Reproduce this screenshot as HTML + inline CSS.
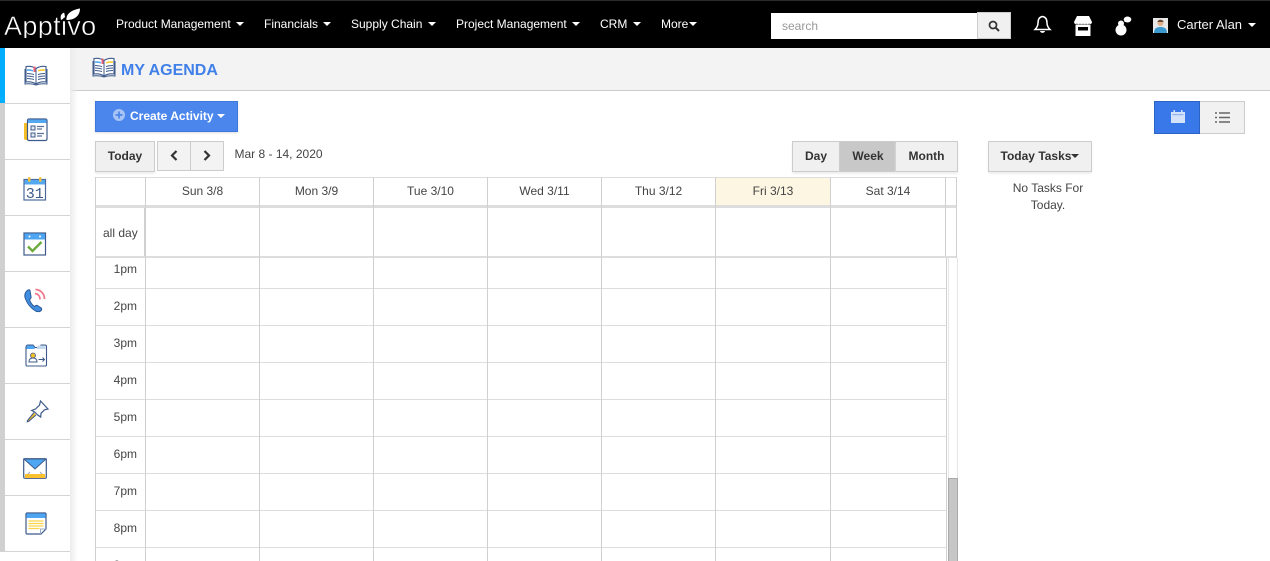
<!DOCTYPE html>
<html><head><meta charset="utf-8"><style>
html,body{margin:0;padding:0;width:1270px;height:561px;overflow:hidden;background:#fff;font-family:"Liberation Sans",sans-serif;color:#333}
#w{position:relative;width:1270px;height:561px;overflow:hidden}
.a{position:absolute}
.t{position:absolute;white-space:nowrap;font-size:12px;line-height:14px}
.n{position:absolute;top:17px;color:#fff;font-size:12px;line-height:14px;white-space:nowrap}
.c{display:inline-block;width:0;height:0;border-left:4px solid transparent;border-right:4px solid transparent;border-top:4px solid #fff;vertical-align:2px;margin-left:3px}
.h{position:absolute;background:#ddd;height:1px}
.v{position:absolute;background:#d0d0d0;width:1px}
.btn{position:absolute;box-sizing:border-box;background:#f0f0f0;border:1px solid #ccc;font-size:12px;font-weight:bold;color:#333;text-align:center;box-shadow:0 2px 2px #eee}
.day{position:absolute;top:184px;font-size:12px;line-height:14px;color:#444;text-align:center}
.tm{position:absolute;left:96px;width:41px;text-align:right;font-size:12px;line-height:14px;color:#444}
.s{position:absolute;left:5px;width:65px;height:1px;background:#d4d4d4}
svg{position:absolute;overflow:visible}
</style></head><body><div id="w">
<div class="a" style="left:0;top:0;width:1270px;height:48px;background:#000"></div>
<div class="a" style="left:0;top:0;width:1270px;height:1px;background:#2a2a2a"></div>

<div class="a" style="left:0;top:10px;width:100px;height:28px;overflow:hidden"><div class="t" style="left:4px;top:1px;font-size:27px;line-height:30px;color:#fff;letter-spacing:.35px;-webkit-text-stroke:.5px #000">Apptivo</div></div>
<svg style="left:60px;top:8px" width="22" height="14" viewBox="0 0 22 14"><path d="M1 12C0 8 1 6 4 4.500c1.500 3 .5 6-3 7.500zM6.500 12C6 6 11 2 20 .5c0 7-5 11.500-13.500 11.500z" fill="#fff"/></svg>

<div class="n" style="left:116px">Product Management <i class="c" style="margin-left:2px"></i></div>
<div class="n" style="left:264px">Financials <i class="c" style="margin-left:2px"></i></div>
<div class="n" style="left:351px">Supply Chain <i class="c" style="margin-left:2px"></i></div>
<div class="n" style="left:456px">Project Management <i class="c" style="margin-left:2px"></i></div>
<div class="n" style="left:600px">CRM <i class="c" style="margin-left:2px"></i></div>
<div class="n" style="left:661px">More<i class="c" style="margin-left:1px"></i></div>

<div class="a" style="left:771px;top:13px;width:206px;height:26px;background:#fff"></div>
<div class="t" style="left:782px;top:19px;color:#999">search</div>
<div class="a" style="left:977px;top:12px;width:34px;height:27px;box-sizing:border-box;background:#f0f0f0;border:1px solid #ccc"></div>
<svg style="left:988px;top:20px" width="12" height="12" viewBox="0 0 12 12"><circle cx="5" cy="5" r="3.500" fill="none" stroke="#333" stroke-width="1.700"/><path d="M7.800 7.800L11 11" stroke="#333" stroke-width="2"/></svg>

<svg style="left:1033px;top:15px" width="19" height="20" viewBox="0 0 19 20"><path d="M9.500 1.500C6 2 5 5 5 8c0 3-1.500 5-3 6.500h15C15.500 13 14 11 14 8c0-3-1-6-4.500-6.500z" fill="none" stroke="#fff" stroke-width="1.500"/><path d="M7 16c.5 2.500 4.500 2.500 5 0z" fill="#fff"/></svg>
<svg style="left:1074px;top:16px" width="18" height="20" viewBox="0 0 18 20"><path d="M3 0h12l3 6c0 2-2 2.500-3 1.500-1 1-2 1-3 0-1 1-2 1-3 0-1 1-2 1-3 0-1 1-2 1-3 0C2 8.500 0 8 0 6z" fill="#fff"/><path d="M1.500 8.500h15V20h-15zM4 11v3.500h10V11z" fill="#fff" fill-rule="evenodd"/></svg>
<svg style="left:1114px;top:16px" width="18" height="20" viewBox="0 0 18 20"><circle cx="7" cy="14" r="5.500" fill="#fff"/><circle cx="7" cy="7.500" r="3" fill="#fff"/><ellipse cx="13.500" cy="3.500" rx="3.800" ry="3" fill="#fff"/><path d="M10 6l2-1 1 1z" fill="#fff"/></svg>

<svg style="left:1153px;top:18px" width="15" height="15" viewBox="0 0 15 15"><rect width="15" height="15" fill="#e8e8e8"/><circle cx="7.500" cy="5" r="3" fill="#e0b090"/><path d="M4.500 4c0-3 6-3 6 0z" fill="#6a4a30"/><path d="M1 15c0-5 3-6 6.500-6S14 10 14 15z" fill="#3a9ad0"/></svg>
<div class="n" style="left:1177px;top:18px;font-size:13px;color:#f4f4f4">Carter Alan <i class="c" style="margin-left:2px"></i></div>

<!-- page header -->
<div class="a" style="left:70px;top:48px;width:1200px;height:42px;background:#f3f3f3"></div>
<div class="a" style="left:70px;top:90px;width:1200px;height:1px;background:#ccc"></div>
<div class="a" style="left:70px;top:48px;width:8px;height:513px;background:linear-gradient(90deg,#ececec,rgba(255,255,255,0))"></div>

<!-- sidebar -->
<div class="a" style="left:0;top:48px;width:70px;height:513px;background:#fff"></div>
<div class="a" style="left:0;top:48px;width:5px;height:55px;background:#00aeff"></div>
<div class="a" style="left:0;top:103px;width:5px;height:449px;background:#d0d0d0"></div>
<div class="s" style="top:103px"></div><div class="s" style="top:159px"></div><div class="s" style="top:215px"></div><div class="s" style="top:271px"></div><div class="s" style="top:327px"></div><div class="s" style="top:383px"></div><div class="s" style="top:439px"></div><div class="s" style="top:495px"></div><div class="a" style="left:0;top:551px;width:70px;height:1px;background:#d4d4d4"></div>

<!-- book icon sidebar -->
<svg style="left:24px;top:65px" width="24" height="21" viewBox="0 0 24 21"><path d="M12 3.500C9 1.500 5 1 2 1.500V17c3-.5 7 0 10 2 3-2 7-2.500 10-2V1.500C19 1 15 1.500 12 3.500z" fill="#fff" stroke="#3d5a8a" stroke-width="1.100"/><path d="M12 3.500V19" stroke="#3d5a8a"/><path d="M1 4v15c4-.5 8 0 11 1 3-1 7-1.500 11-1V4" fill="none" stroke="#3d5a8a" stroke-width="1"/><path d="M3 4.500c2-.5 4 0 6 .5v1.500C7 6 5 5.800 3 6z" fill="#54a8f0"/><path d="M14 5c2-.5 4-1 7-.5V6c-3-.3-5 0-7 .5z" fill="#fbcb2d"/><path d="M9.500 1.500h2V7h-2z" fill="#e8607a"/><path d="M3 8.500c2 0 4 .3 7 1M3 11c2 0 4 .3 7 1M3 13.500c2 0 4 .3 7 1M14 9.500c2-.7 4-1 7-1M14 12c2-.7 4-1 7-1M14 14.500c2-.7 4-1 7-1" stroke="#3d5a8a" stroke-width="1" fill="none"/></svg>

<!-- list -->
<svg style="left:23px;top:118px" width="25" height="24" viewBox="0 0 25 24"><path d="M1 5h4v17H2.500A1.500 1.500 0 0 1 1 20.500z" fill="#f5bf28"/><rect x="4.500" y="1" width="19.500" height="21.500" rx="1.500" fill="#fff" stroke="#3d5a8a" stroke-width="1.200"/><rect x="5" y="1.500" width="18.500" height="3.500" fill="#54a8f0"/><rect x="8" y="8" width="4" height="4" fill="#e4e9f2" stroke="#3d5a8a"/><rect x="8" y="15" width="4" height="4" fill="#e4e9f2" stroke="#3d5a8a"/><path d="M14 8.500h7M14 11h5M14 15.500h7M14 18h5" stroke="#5a7098" stroke-width="1.200"/></svg>

<!-- calendar 31 -->
<svg style="left:23px;top:176px" width="24" height="25" viewBox="0 0 24 25"><rect x="1" y="3.500" width="21.500" height="20.500" fill="#fff" stroke="#4b6a9c" stroke-width="1.200"/><rect x="1.500" y="4" width="20.500" height="4.500" fill="#54a8f0"/><rect x="5" y="1" width="2.500" height="5" rx="1.200" fill="#f0c040"/><rect x="16" y="1" width="2.500" height="5" rx="1.200" fill="#f0c040"/><text x="11.800" y="22" font-family="Liberation Mono,monospace" font-size="15" fill="#3d5a8a" text-anchor="middle">31</text></svg>

<!-- check calendar -->
<svg style="left:23px;top:232px" width="24" height="24" viewBox="0 0 24 24"><rect x="1" y="1" width="21.500" height="22" fill="#fff" stroke="#3d5a8a" stroke-width="1.200"/><rect x="1.500" y="1.500" width="20.500" height="6" fill="#4ea6f2"/><circle cx="6.500" cy="4.500" r="1" fill="#fff"/><circle cx="17" cy="4.500" r="1" fill="#fff"/><path d="M5 14.500l4.500 4.500L18.500 10" fill="none" stroke="#6aaa3c" stroke-width="2.300"/></svg>

<!-- phone -->
<svg style="left:23px;top:287px" width="25" height="26" viewBox="0 0 25 26"><path d="M5 3C2 5 1 8 2.500 12c2 5 5 9 10 12 2 1 5 1 6-1 .5-1 0-2-1-2.500l-3-2c-1-.5-2 0-3 1-2-1-4.500-4.500-5-7 1-.7 2-1.500 1.500-3L7 3.500C6.800 2.700 5.800 2.500 5 3z" fill="#3f8ee0" stroke="#2f5a96" stroke-width="1"/><path d="M11 6.500c3 .3 5 2.500 5 6M11.500 2.500c5 .3 9 4 9 9.500" fill="none" stroke="#f2758a" stroke-width="1.700" transform="translate(1 0)"/></svg>

<!-- folder -->
<svg style="left:25px;top:344px" width="22" height="23" viewBox="0 0 22 23"><path d="M1 3a2 2 0 0 1 2-2h5l2 2.500h5l1-2.500h4a1.500 1.500 0 0 1 1.500 1.500V21a1 1 0 0 1-1 1H2a1 1 0 0 1-1-1z" fill="#fff" stroke="#3d5a8a" stroke-width="1.100"/><path d="M1.500 2.500A1.500 1.500 0 0 1 3 1.500h5l2 3.500H1.500z" fill="#4ea6f2"/><path d="M11.500 5l1.500-3.500h7L21 5z" fill="#c4d8ee"/><circle cx="8" cy="11.500" r="2.500" fill="#f5bf28" stroke="#3d5a8a" stroke-width=".8"/><path d="M4 18c0-3 2-4 4-4s4 1 4 4z" fill="#fff" stroke="#3d5a8a"/><path d="M13.500 15.500h6M17.500 13.500l2 2-2 2" fill="none" stroke="#3d5a8a"/></svg>

<!-- pin -->
<svg style="left:26px;top:400px" width="23" height="23" viewBox="0 0 23 23"><path d="M14.500 1l7.500 8-3.500 .8-3.500 3.500-.3 3.700-3-2-3-3-3-1.500L9.500 9l4-3.800z" fill="#fff" stroke="#3d5a8a" stroke-width="1.200"/><path d="M8 12.500L1.500 20.500l-.3 1.300 1.300-.3L10 15" fill="#f0bc2c" stroke="#3d5a8a"/></svg>

<!-- mail -->
<svg style="left:23px;top:458px" width="24" height="21" viewBox="0 0 24 21"><rect x=".7" y=".7" width="22.600" height="19.600" rx="1" fill="#fff" stroke="#3d5a8a" stroke-width="1.200"/><path d="M1 1h22L12 11z" fill="#4ea6f2" stroke="#3d5a8a" stroke-width="1"/><path d="M1 20l6-6M23 20l-6-6" stroke="#9aa8c0" stroke-width="1"/><rect x="2" y="16" width="20" height="4" fill="#fbc02d"/></svg>

<!-- note -->
<svg style="left:25px;top:512px" width="22" height="23" viewBox="0 0 22 23"><path d="M1 2a1 1 0 0 1 1-1h18a1 1 0 0 1 1 1v15l-5 5H2a1 1 0 0 1-1-1z" fill="#fff" stroke="#3d5a8a" stroke-width="1.200"/><path d="M1.500 1.500h19V6h-19z" fill="#4ea6f2"/><path d="M3.500 9h15M3.500 11.500h15M3.500 14h15M3.500 16.500h11" stroke="#fbd44c" stroke-width="1.300"/><path d="M15.500 22v-5h5.500" fill="none" stroke="#9aa8c0"/></svg>

<!-- page title -->
<svg style="left:92px;top:57px" width="24" height="21" viewBox="0 0 24 21"><path d="M12 3.500C9 1.500 5 1 2 1.500V17c3-.5 7 0 10 2 3-2 7-2.500 10-2V1.500C19 1 15 1.500 12 3.500z" fill="#fff" stroke="#3d5a8a" stroke-width="1.100"/><path d="M12 3.500V19" stroke="#3d5a8a"/><path d="M1 4v15c4-.5 8 0 11 1 3-1 7-1.500 11-1V4" fill="none" stroke="#3d5a8a" stroke-width="1"/><path d="M3 4.500c2-.5 4 0 6 .5v1.500C7 6 5 5.800 3 6z" fill="#54a8f0"/><path d="M14 5c2-.5 4-1 7-.5V6c-3-.3-5 0-7 .5z" fill="#fbcb2d"/><path d="M9.500 1.500h2V7h-2z" fill="#e8607a"/><path d="M3 8.500c2 0 4 .3 7 1M3 11c2 0 4 .3 7 1M3 13.500c2 0 4 .3 7 1M14 9.500c2-.7 4-1 7-1M14 12c2-.7 4-1 7-1M14 14.500c2-.7 4-1 7-1" stroke="#3d5a8a" stroke-width="1" fill="none"/></svg>
<div class="t" style="left:121px;top:61px;font-size:16px;line-height:19px;font-weight:bold;color:#4080e8">MY AGENDA</div>

<!-- create -->
<div class="a" style="left:95px;top:101px;width:143px;height:31px;box-sizing:border-box;background:#4a86ec;border:1px solid #3f78dc;box-shadow:0 1px 2px #ddd"></div>
<svg style="left:113px;top:109px" width="12" height="12" viewBox="0 0 12 12"><circle cx="6" cy="6" r="6" fill="#a8c4f4"/><path d="M6 2.500v7M2.500 6h7" stroke="#4a84ea" stroke-width="1.700"/></svg>
<div class="t" style="left:130px;top:109px;color:#fff;font-weight:bold">Create Activity<i class="c" style="margin-left:3px"></i></div>

<!-- view toggle -->
<div class="a" style="left:1154px;top:101px;width:46px;height:33px;box-sizing:border-box;background:#3878e8;border:1px solid #2c62c4"></div>
<div class="a" style="left:1200px;top:101px;width:45px;height:33px;box-sizing:border-box;background:#f1f1f1;border:1px solid #ccc;border-left:0"></div>
<svg style="left:1171px;top:110px" width="14" height="14" viewBox="0 0 14 14"><path d="M0 2h2.500V0h1.500v2h6V0h1.500v2H14v11H0z" fill="#d4e2fa"/><rect x="1.500" y="4" width="11" height="1.200" fill="#8fb4f0"/></svg>
<svg style="left:1215px;top:111px" width="15" height="13" viewBox="0 0 15 13"><path d="M0 2h2M4 2h11M0 6.500h2M4 6.500h11M0 11h2M4 11h11" stroke="#666" stroke-width="1.600"/></svg>

<!-- toolbar -->
<div class="btn" style="left:95px;top:141px;width:60px;height:31px;line-height:29px">Today</div>
<div class="a" style="left:157px;top:141px;width:67px;height:30px;box-sizing:border-box;background:#f3f3f3;border:1px solid #ccc"></div>
<div class="v" style="left:190px;top:141px;height:30px;background:#ccc"></div>
<svg style="left:170px;top:150px" width="8" height="11" viewBox="0 0 8 11"><path d="M6.500 1L2 5.500 6.500 10" fill="none" stroke="#333" stroke-width="2.200"/></svg>
<svg style="left:203px;top:150px" width="8" height="11" viewBox="0 0 8 11"><path d="M1.500 1L6 5.500 1.500 10" fill="none" stroke="#333" stroke-width="2.200"/></svg>
<div class="t" style="left:234.500px;top:147px;color:#444">Mar 8 - 14, 2020</div>

<div class="btn" style="left:792px;top:141px;width:48px;height:31px;line-height:29px">Day</div>
<div class="btn" style="left:839px;top:141px;width:58px;height:31px;line-height:29px;background:#c8c8c8;border-top-color:#ccc">Week</div>
<div class="btn" style="left:896px;top:141px;width:62px;height:31px;line-height:29px;border-left:0">Month</div>
<div class="btn" style="left:988px;top:141px;width:104px;height:31px;line-height:29px">Today Tasks<i class="c" style="margin-left:0;border-top-color:#333"></i></div>
<div class="t" style="left:988px;top:180px;width:120px;text-align:center;line-height:17px;color:#444;white-space:normal">No Tasks For<br>Today.</div>

<!-- grid -->
<div class="a" style="left:716px;top:178px;width:114px;height:27px;background:#fdf6e2"></div>
<div class="h" style="left:95px;top:177px;width:862px"></div>
<div class="a" style="left:95px;top:205px;width:862px;height:3px;background:#ddd"></div>
<div class="a" style="left:95px;top:256px;width:862px;height:2px;background:#ddd"></div>
<div class="h" style="left:96px;top:288px;width:851px"></div>
<div class="h" style="left:96px;top:325px;width:851px"></div>
<div class="h" style="left:96px;top:362px;width:851px"></div>
<div class="h" style="left:96px;top:399px;width:851px"></div>
<div class="h" style="left:96px;top:436px;width:851px"></div>
<div class="h" style="left:96px;top:473px;width:851px"></div>
<div class="h" style="left:96px;top:510px;width:851px"></div>
<div class="h" style="left:96px;top:547px;width:851px"></div>

<div class="v" style="left:95px;top:177px;height:384px"></div>
<div class="v" style="left:145px;top:177px;height:384px"></div>
<div class="v" style="left:144px;top:208px;height:48px"></div>
<div class="v" style="left:259px;top:177px;height:384px"></div>
<div class="v" style="left:373px;top:177px;height:384px"></div>
<div class="v" style="left:487px;top:177px;height:384px"></div>
<div class="v" style="left:601px;top:177px;height:384px"></div>
<div class="v" style="left:715px;top:177px;height:384px"></div>
<div class="v" style="left:830px;top:177px;height:384px"></div>
<div class="v" style="left:945px;top:177px;height:79px"></div>
<div class="v" style="left:946px;top:258px;height:303px"></div>
<div class="v" style="left:956px;top:177px;height:81px"></div>

<div class="a" style="left:948px;top:258px;width:10px;height:303px;box-sizing:border-box;border-left:1px solid #e6e6e6;border-right:1px solid #e6e6e6;background:#fff"></div>
<div class="a" style="left:948px;top:478px;width:10px;height:83px;box-sizing:border-box;background:#c6c6c6;border:1px solid #aaa;border-bottom:0"></div>

<div class="day" style="left:146px;width:113px">Sun 3/8</div>
<div class="day" style="left:260px;width:113px">Mon 3/9</div>
<div class="day" style="left:374px;width:113px">Tue 3/10</div>
<div class="day" style="left:488px;width:113px">Wed 3/11</div>
<div class="day" style="left:602px;width:113px">Thu 3/12</div>
<div class="day" style="left:716px;width:114px">Fri 3/13</div>
<div class="day" style="left:831px;width:114px">Sat 3/14</div>

<div class="t" style="left:103px;top:226px;color:#444">all day</div>
<div class="tm" style="top:262px">1pm</div>
<div class="tm" style="top:299px">2pm</div>
<div class="tm" style="top:336px">3pm</div>
<div class="tm" style="top:373px">4pm</div>
<div class="tm" style="top:410px">5pm</div>
<div class="tm" style="top:447px">6pm</div>
<div class="tm" style="top:484px">7pm</div>
<div class="tm" style="top:521px">8pm</div>
<div class="tm" style="top:558px">9pm</div>
</div></body></html>
